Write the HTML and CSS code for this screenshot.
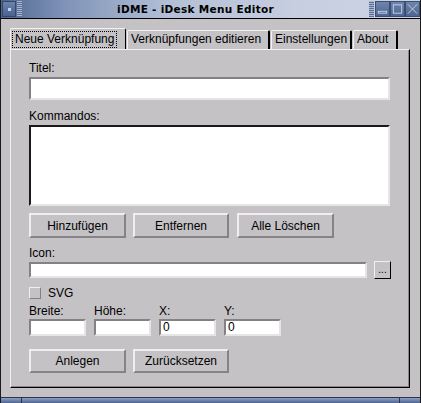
FILE: index.html
```html
<!DOCTYPE html>
<html>
<head>
<meta charset="utf-8">
<link rel="stylesheet" href="styles.css">
</head>
<body>
<div class="win">
  <div class="titlebar">
    <div class="menu-btn"><span class="dot"></span></div>
    <div class="grip"></div>
    <div class="title">iDME - iDesk Menu Editor</div>
    <div class="grip"></div>
    <div class="tb-btn"><svg width="14" height="14" viewBox="0 0 14 14"><rect x="2.5" y="9.5" width="9" height="2" fill="none" stroke="#c9d2e4"/></svg></div>
    <div class="tb-btn"><svg width="14" height="14" viewBox="0 0 14 14"><rect x="2.5" y="2.5" width="9" height="9" fill="none" stroke="#c9d2e4"/></svg></div>
    <div class="tb-btn"><svg width="14" height="14" viewBox="0 0 14 14"><path d="M2 2 L12 12 M12 2 L2 12" stroke="#c9d2e4" stroke-width="1"/></svg></div>
  </div>
  <div class="client">
    <div class="tabs">
      <div class="tab active t1"><span class="focus">Neue Verknüpfung</span></div>
      <div class="tab t2">Verknüpfungen editieren</div>
      <div class="tab t3">Einstellungen</div>
      <div class="tab t4">About</div>
    </div>
    <div class="panel">
      <div class="lbl lbl-titel">Titel:</div>
      <div class="field wide"></div>
      <div class="lbl lbl-kom">Kommandos:</div>
      <div class="field area"></div>
      <div class="btnrow row1">
        <div class="btn">Hinzufügen</div>
        <div class="btn">Entfernen</div>
        <div class="btn">Alle Löschen</div>
      </div>
      <div class="lbl lbl-icon">Icon:</div>
      <div class="iconrow">
        <div class="field icon"></div>
        <div class="btn dots">...</div>
      </div>
      <div class="checkrow">
        <div class="check"></div>
        <span>SVG</span>
      </div>
      <div class="dims">
        <div class="dim"><div class="lbl">Breite:</div><div class="field small"></div></div>
        <div class="dim"><div class="lbl">Höhe:</div><div class="field small"></div></div>
        <div class="dim"><div class="lbl">X:</div><div class="field small">0</div></div>
        <div class="dim"><div class="lbl">Y:</div><div class="field small">0</div></div>
      </div>
      <div class="btnrow row2">
        <div class="btn">Anlegen</div>
        <div class="btn">Zurücksetzen</div>
      </div>
    </div>
  </div>
  <div class="handle">
    <div class="h-seg h-left"></div>
    <div class="h-seg h-mid"></div>
    <div class="h-seg h-right"></div>
  </div>
</div>
</body>
</html>
```

FILE: styles.css
```css
* { box-sizing: border-box; }
html, body { margin: 0; padding: 0; background: #c4c2c5; }
body {
  font-family: "Liberation Sans", Arial, sans-serif;
  font-size: 12px;
  color: #000;
}
.win {
  width: 421px;
  height: 403px;
  display: flex;
  flex-direction: column;
  background: #c4c2c5;
  border-left: 1px solid #1a1a1a;
  border-right: 1px solid #1a1a1a;
}
.titlebar {
  height: 19px;
  flex: none;
  display: flex;
  align-items: stretch;
  border-bottom: 1px solid #000;
  background: linear-gradient(to right, #4f6790 0%, #7f93b8 15%, #b3bfd6 40%, #c6cee0 70%, #ccd3e3 100%);
  padding: 1px 0 1px 1px;
}
.menu-btn {
  width: 14px;
  background: linear-gradient(#6c83ad, #4a6290);
  border: 1px solid #34476c;
  display: flex;
  align-items: center;
  justify-content: center;
}
.dot { width: 3px; height: 3px; background: #c8d2e6; }
.grip {
  width: 5px;
  margin: 0 1px;
  background: repeating-linear-gradient(to bottom, #a9b6d0 0 1px, #5b6f98 1px 2px);
}
.title {
  flex: 1;
  text-align: center;
  font-family: "DejaVu Sans", "Liberation Sans", sans-serif;
  font-weight: bold;
  font-size: 10.5px;
  line-height: 16px;
  letter-spacing: 0.3px;
}
.tb-btn {
  width: 15px;
  background: linear-gradient(#6f85ae, #4d6590);
  border: 1px solid #3b4e74;
  display: flex;
  align-items: center;
  justify-content: center;
}
.client {
  flex: 1;
  padding: 9px 9px 0 9px;
  display: flex;
  flex-direction: column;
}
.tabs {
  display: flex;
  height: 21px;
  align-items: flex-end;
  flex: none;
}
.tab {
  height: 19px;
  border-top: 1px solid #f2f2f2;
  border-left: 1px solid #f2f2f2;
  border-right: 2px solid #000;
  border-radius: 2px 2px 0 0;
  font-size: 12px;
  line-height: 17px;
  padding-left: 3px;
  white-space: nowrap;
  margin-right: 1px;
}
.tab.active {
  height: 21px;
  border-right: 1px solid #000;
  padding: 2px 0 0 1px;
  line-height: 15px;
}
.focus {
  display: inline-block;
  border: 1px dotted #000;
  padding: 0 2px 0 2px;
  line-height: 15px;
}
.t1 { width: 116px; }
.t2 { width: 143px; }
.t3 { width: 81px; }
.t4 { width: 45px; }
.panel {
  width: 400px;
  height: 339px;
  flex: none;
  border-top: 1px solid #f0f0f0;
  border-left: 1px solid #f0f0f0;
  border-right: 1px solid #000;
  border-bottom: 1px solid #000;
  box-shadow: inset -1px -1px 0 #8a888b;
  padding: 10px 0 0 18px;
}
.lbl { line-height: 16px; height: 16px; font-size: 12px; white-space: nowrap; }
.field {
  background: #fff;
  border-top: 2px solid #838183;
  border-left: 2px solid #838183;
  border-right: 2px solid #e6e4e6;
  border-bottom: 2px solid #e6e4e6;
}
.wide { width: 361px; height: 23px; margin-top: 1px; }
.lbl-kom { margin-top: 8px; }
.area {
  width: 361px;
  height: 81px;
  margin-top: 1px;
  border-top: 2px solid #1a1a1a;
  border-left: 2px solid #1a1a1a;
}
.btnrow { display: flex; gap: 7px; }
.row1 { margin-top: 7px; }
.btn {
  width: 97px;
  height: 25px;
  background: #c4c2c5;
  border-top: 2px solid #f0eef0;
  border-left: 2px solid #f0eef0;
  border-right: 2px solid #858385;
  border-bottom: 2px solid #858385;
  display: flex;
  align-items: center;
  justify-content: center;
  font-size: 12px;
}
.row1 .btn:nth-child(2) { width: 96px; }
.row1 .btn:nth-child(3) { margin-left: 1px; }
.lbl-icon { margin-top: 7px; }
.iconrow { display: flex; align-items: center; height: 18px; gap: 7px; }
.icon { width: 338px; height: 16px; }
.dots {
  width: 17px;
  height: 18px;
  border-width: 1px;
  border-top-color: #f0eef0;
  border-left-color: #f0eef0;
  border-right-color: #000;
  border-bottom-color: #000;
  font-size: 10px;
  align-items: flex-end;
  padding-bottom: 3px;
}
.checkrow {
  margin-top: 6px;
  height: 16px;
  display: flex;
  align-items: center;
  gap: 7px;
  font-size: 12px;
}
.check {
  width: 12px;
  height: 12px;
  border-top: 1px solid #efefef;
  border-left: 1px solid #efefef;
  border-right: 1px solid #838183;
  border-bottom: 1px solid #838183;
  background: #c4c2c5;
}
.dims { display: flex; gap: 8px; margin-top: 2px; }
.dim { display: flex; flex-direction: column; }
.small {
  width: 57px;
  height: 17px;
  font-size: 12px;
  line-height: 13px;
  padding-left: 2px;
}
.row2 { margin-top: 13px; }
.row2 .btn { height: 24px; }
.row2 .btn:nth-child(2) { width: 96px; }
.handle {
  flex: none;
  height: 6px;
  display: flex;
  border-top: 1px solid #2b3448;
}
.h-seg {
  background: linear-gradient(#8ea0c4, #4f6590);
  border-right: 1px solid #2b3448;
}
.h-left { width: 21px; }
.h-mid { flex: 1; }
.h-right { width: 20px; border-right: none; }
```
